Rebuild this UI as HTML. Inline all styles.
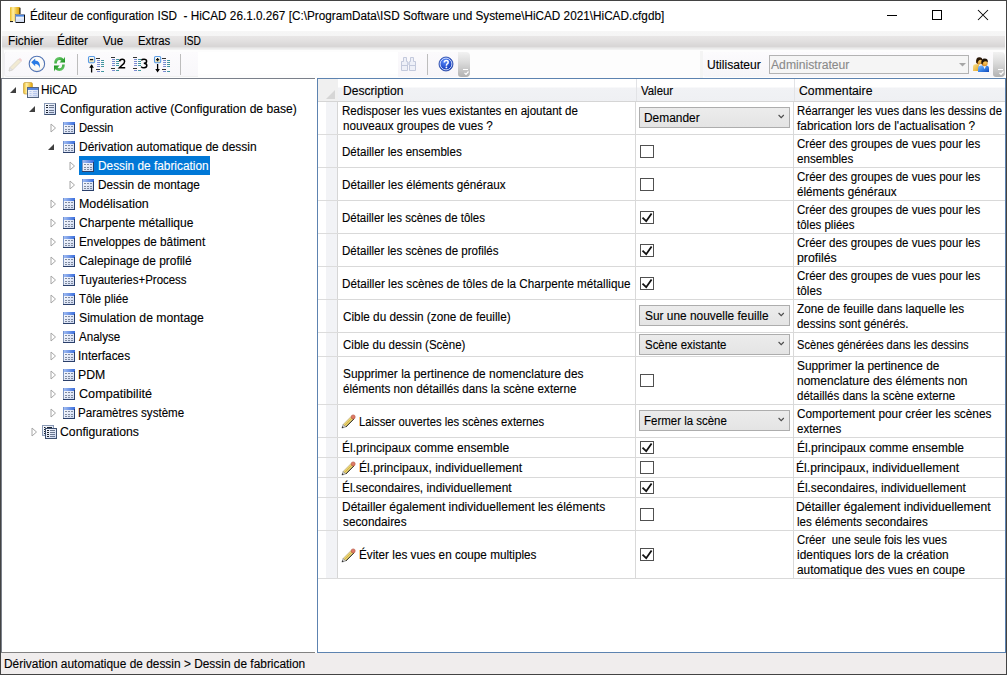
<!DOCTYPE html>
<html><head><meta charset="utf-8">
<style>
*{margin:0;padding:0;box-sizing:border-box}
html,body{width:1007px;height:675px;overflow:hidden;background:#fff}
body{position:relative;font-family:"Liberation Sans",sans-serif;font-size:12px;color:#000}
.a{position:absolute}
.t{position:absolute;white-space:pre;line-height:15px;transform-origin:0 0;-webkit-text-stroke:0.12px currentColor}
#win{position:absolute;left:0;top:0;width:1007px;height:675px;border:1px solid #434343;background:#fff}
</style></head><body>
<div id="win"></div>

<!-- title bar -->
<div class="a" style="left:1px;top:1px;width:1005px;height:30px;background:#fff"></div>
<svg class="a" style="left:9px;top:6px" width="17" height="18" viewBox="0 0 17 18">
  <defs>
    <linearGradient id="gy" x1="0" x2="1" y1="0" y2="0"><stop offset="0" stop-color="#e9b820"/><stop offset="0.3" stop-color="#fff1a8"/><stop offset="0.6" stop-color="#f2c84a"/><stop offset="1" stop-color="#d89a00"/></linearGradient>
    <linearGradient id="gw" x1="0" x2="0" y1="0" y2="1"><stop offset="0" stop-color="#fff"/><stop offset="1" stop-color="#c9d6ef"/></linearGradient>
  </defs>
  <rect x="1" y="1" width="10" height="14.5" rx="0.8" fill="url(#gy)"/>
  <path d="M11 1.8V8" stroke="#111" stroke-width="1"/>
  <path d="M1 15.6H4" stroke="#111" stroke-width="1"/>
  <rect x="6.5" y="8.5" width="9" height="8" fill="url(#gw)" stroke="#6b7a99" stroke-width="0.8"/>
  <path d="M15.5 9V16.5H7" stroke="#111" stroke-width="1" fill="none"/>
  <rect x="7" y="9" width="8" height="1.6" fill="#4a86e0"/>
</svg>
<!-- window controls -->
<div class="a" style="left:887px;top:15px;width:10px;height:1px;background:#000"></div>
<div class="a" style="left:932px;top:10px;width:10px;height:10px;border:1px solid #000"></div>
<svg class="a" style="left:977px;top:9px" width="12" height="12" viewBox="0 0 12 12"><path d="M1 1L11 11M11 1L1 11" stroke="#000" stroke-width="1.05"/></svg>

<!-- menu bar -->
<div class="a" style="left:2px;top:31px;width:1003px;height:19px;background:linear-gradient(#f6f6f6 0,#f5f5f5 4.5px,#e8e6e6 5.5px,#e2e0e0 10px,#d9d7d7 14.5px,#d8d6d6 15.5px,#e8e8e8 17px,#f4f4f4 19px)"></div>

<!-- toolbar -->
<div class="a" style="left:2px;top:50px;width:1003px;height:28px;background:#fdfdfd"></div><div class="a" style="left:2px;top:50px;width:2px;height:28px;background:#f0f0f0"></div>
<div id="toolbar">
<div class="a" style="left:4px;top:52px;width:194px;height:25px;border-radius:3px 0 0 3px;background:linear-gradient(#fcfbfd,#f8f7fa);border-left:1px solid #f0eef2;border-bottom:1px solid #f0f0f0"></div>
<div class="a" style="left:198px;top:52px;width:200px;height:22px;background:#fff"></div>
<div class="a" style="left:398px;top:52px;width:61px;height:25px;background:linear-gradient(#fbfafc,#f7f5f9)"></div>
<div class="a" style="left:458px;top:52px;width:12px;height:25px;border-radius:0 4px 4px 3px;background:linear-gradient(#f2f2f2 0,#dcdcdc 40%,#b2b2b2 100%)"></div>
<div class="a" style="left:700px;top:51px;width:3px;height:27px;background:#f4f4f4"></div>
<div class="a" style="left:703px;top:52px;width:291px;height:25px;border-radius:3px 0 0 3px;background:linear-gradient(#fcfbfd,#f6f5f8)"></div>
<div class="a" style="left:993px;top:52px;width:12px;height:25px;border-radius:0 4px 4px 3px;background:linear-gradient(#f2f2f2 0,#dcdcdc 40%,#b2b2b2 100%)"></div>
<!-- grip marks -->
<div class="a" style="left:463px;top:69px;width:5px;height:1px;background:#fff"></div>
<svg class="a" style="left:463px;top:71px" width="7" height="5"><path d="M1.5 1.8L3 3.3L5.5 0.5" stroke="#fff" fill="none" stroke-width="1.2"/></svg>
<div class="a" style="left:998px;top:69px;width:5px;height:1px;background:#fff"></div>
<svg class="a" style="left:998px;top:71px" width="7" height="5"><path d="M1.5 1.8L3 3.3L5.5 0.5" stroke="#fff" fill="none" stroke-width="1.2"/></svg>
<!-- separators -->
<div class="a" style="left:77px;top:54px;width:1px;height:21px;background:#bdbdbd"></div>
<div class="a" style="left:180px;top:54px;width:1px;height:21px;background:#bdbdbd"></div>
<div class="a" style="left:427px;top:54px;width:1px;height:21px;background:#bdbdbd"></div>
<!-- pencil disabled -->
<svg class="a" style="left:7px;top:57px" width="16" height="16" viewBox="0 0 16 16">
  <path d="M2 14L3 10.5L11.5 2L14 4.5L5.5 13Z" fill="#f1ead2" stroke="#d8d4cc" stroke-width="0.8"/>
  <path d="M11.5 2L14 4.5L15 3.5Q15 2 13 1Z" fill="#f2cfcf"/>
  <path d="M2 14L3 10.5L5.5 13Z" fill="#e6e6e6" stroke="#cfcfcf" stroke-width="0.5"/>
</svg>
<!-- undo -->
<svg class="a" style="left:28px;top:55px" width="18" height="18" viewBox="0 0 18 18">
  <defs><radialGradient id="gu" cx="0.45" cy="0.35" r="0.7"><stop offset="0" stop-color="#fff"/><stop offset="0.7" stop-color="#fbfaf6"/><stop offset="1" stop-color="#ece8dc"/></radialGradient></defs>
  <circle cx="8.9" cy="8.9" r="7.7" fill="url(#gu)" stroke="#5274b4" stroke-width="1.1"/>
  <path d="M3.2 7.3L7.2 3.4V5.5Q12.6 5.6 11.9 13.2Q10.6 9.1 7.2 9.1V11.3Z" fill="#2a7be4"/>
</svg>
<!-- refresh -->
<svg class="a" style="left:53px;top:56px" width="13" height="16" viewBox="0 0 13 16">
  <defs><linearGradient id="gr" x1="0" y1="0" x2="1" y2="1"><stop offset="0" stop-color="#7fd87f"/><stop offset="1" stop-color="#0e8a12"/></linearGradient></defs>
  <path d="M1.2 7.6Q1.2 1.2 6.6 1.1Q9.2 1.1 10.6 2.9L12 0.8V6.6H6.4L8.3 4.8Q7.6 3.9 6.4 3.9Q3.8 4.1 3.8 7.6Z" fill="url(#gr)"/>
  <path transform="rotate(180 6.5 8.1)" d="M1.2 7.6Q1.2 1.2 6.6 1.1Q9.2 1.1 10.6 2.9L12 0.8V6.6H6.4L8.3 4.8Q7.6 3.9 6.4 3.9Q3.8 4.1 3.8 7.6Z" fill="url(#gr)"/>
</svg>
<!-- collapse -->
<svg class="a" style="left:87px;top:55px" width="19" height="19" viewBox="0 0 19 19">
  <defs><linearGradient id="gb" x1="0" y1="0" x2="0" y2="1"><stop offset="0" stop-color="#fff"/><stop offset="1" stop-color="#e8e0b0"/></linearGradient>
  <linearGradient id="gd" x1="0" y1="0" x2="1" y2="0"><stop offset="0" stop-color="#8f88e0"/><stop offset="1" stop-color="#2f9a90"/></linearGradient></defs>
  <rect x="1.5" y="1.5" width="6.2" height="6.2" rx="1.2" fill="url(#gb)" stroke="#5a9be6" stroke-width="1.1"/>
  <path d="M3 4.6H6.2" stroke="#111" stroke-width="1.3"/>
  <path d="M4.6 10V17.5" stroke="#000" stroke-width="1.3"/><path d="M2.3 12.8L4.6 9.2L6.9 12.8Z" fill="#000"/>
  <path d="M9 3.5H13M9 14.5H13" stroke="#333" stroke-width="1.1"/>
  <path d="M10 5.5H13M14 5.5H17M10 7.5H13M14 7.5H17M10 9.5H13M14 9.5H17M10 11.5H13M14 11.5H17M10 16.5H13M14 16.5H17" stroke="url(#gd)" stroke-width="1"/>
</svg>
<!-- 2 -->
<svg class="a" style="left:110px;top:55px" width="17" height="18" viewBox="0 0 17 18">
  <defs><linearGradient id="gd2" x1="0" y1="0" x2="1" y2="0"><stop offset="0" stop-color="#8f88e0"/><stop offset="1" stop-color="#2f9a90"/></linearGradient></defs>
  <path d="M1 2.5H5M1 13.5H5" stroke="#333" stroke-width="1.1"/>
  <path d="M2 4.5H5M6 4.5H9M2 6.5H5M6 6.5H9M2 8.5H5M6 8.5H9M2 10.5H5M6 10.5H9M2 15.5H5M6 15.5H9" stroke="url(#gd2)" stroke-width="1"/>
  <path d="M9.6 6.4Q9.8 4.2 12.2 4.2Q14.6 4.2 14.6 6.4Q14.6 8 12.2 10L9.4 12.8H15.2" fill="none" stroke="#000" stroke-width="1.5"/>
</svg>
<!-- 3 -->
<svg class="a" style="left:132px;top:55px" width="17" height="18" viewBox="0 0 17 18">
  <path d="M1 2.5H5M1 13.5H5" stroke="#333" stroke-width="1.1"/>
  <path d="M2 4.5H5M6 4.5H9M2 6.5H5M6 6.5H9M2 8.5H5M6 8.5H9M2 10.5H5M6 10.5H9M2 15.5H5M6 15.5H9" stroke="url(#gd2)" stroke-width="1"/>
  <path d="M9.3 5.3Q10 4.2 12 4.2Q14.6 4.2 14.6 6.2Q14.6 8.2 11.8 8.3Q14.8 8.4 14.8 10.6Q14.8 12.8 12 12.8Q10 12.8 9.1 11.6" fill="none" stroke="#000" stroke-width="1.5"/>
</svg>
<!-- expand -->
<svg class="a" style="left:153px;top:55px" width="19" height="19" viewBox="0 0 19 19">
  <rect x="1.5" y="1.5" width="6.2" height="6.2" rx="1.2" fill="url(#gb)" stroke="#5a9be6" stroke-width="1.1"/>
  <path d="M3 4.6H6.2M4.6 3V6.2" stroke="#111" stroke-width="1.3"/>
  <path d="M4.6 9V16" stroke="#000" stroke-width="1.3"/><path d="M2.3 14L4.6 17.6L6.9 14Z" fill="#000"/>
  <path d="M9 3.5H13M9 14.5H13" stroke="#333" stroke-width="1.1"/>
  <path d="M10 5.5H13M14 5.5H17M10 7.5H13M14 7.5H17M10 9.5H13M14 9.5H17M10 11.5H13M14 11.5H17M10 16.5H13M14 16.5H17" stroke="url(#gd)" stroke-width="1"/>
</svg>
<!-- binoculars disabled -->
<svg class="a" style="left:400px;top:56px" width="18" height="16" viewBox="0 0 18 16">
  <path d="M3.5 1.5H6.5V5.5H7.5V14.5H1.5V5.5H3.5Z" fill="#eef0f8" stroke="#c3c9dc" stroke-width="1"/>
  <path d="M10.5 1.5H13.5V5.5H15.5V14.5H9.5V5.5H10.5Z" fill="#eef0f8" stroke="#c3c9dc" stroke-width="1"/>
  <path d="M1.5 9.5H7.5M9.5 9.5H15.5" stroke="#c3c9dc" stroke-width="1"/>
  <rect x="7.5" y="6" width="2" height="3" fill="#d4d9e8"/>
</svg>
<!-- help -->
<svg class="a" style="left:438px;top:56px" width="16" height="16" viewBox="0 0 16 16">
  <defs><radialGradient id="gh" cx="0.4" cy="0.3" r="0.7"><stop offset="0" stop-color="#5a8cff"/><stop offset="1" stop-color="#0a2fb0"/></radialGradient></defs>
  <circle cx="8" cy="8" r="7" fill="url(#gh)" stroke="#1c3fa0" stroke-width="0.8"/>
  <circle cx="8" cy="8" r="5.9" fill="none" stroke="#dfe8ff" stroke-width="0.9"/>
  <path d="M6.3 6.4Q6.3 4.5 8.3 4.5Q10.2 4.5 10.2 6.2Q10.2 7.3 9 8Q8.4 8.4 8.4 9.7" fill="none" stroke="#fff" stroke-width="1.5"/><circle cx="8.4" cy="11.4" r="0.9" fill="#fff"/>
</svg>
<!-- user area -->
<div class="a" style="left:769px;top:55px;width:200px;height:19px;border:1px solid #b3b3b3;background:#f5f5f5"></div>
<svg class="a" style="left:959px;top:63px" width="7" height="4"><path d="M0 0H7L3.5 3.5Z" fill="#a6a6a6"/></svg>
<svg class="a" style="left:972px;top:56px" width="18" height="17" viewBox="0 0 18 17">
  <defs>
    <linearGradient id="pyb" x1="0" y1="0" x2="1" y2="1"><stop offset="0" stop-color="#fbe08a"/><stop offset="1" stop-color="#e2a628"/></linearGradient>
    <linearGradient id="pbb" x1="0" y1="0" x2="1" y2="1"><stop offset="0" stop-color="#8cc4ff"/><stop offset="0.5" stop-color="#3a86ea"/><stop offset="1" stop-color="#1048b8"/></linearGradient>
    <radialGradient id="pfc" cx="0.6" cy="0.4" r="0.6"><stop offset="0" stop-color="#f8cc60"/><stop offset="1" stop-color="#d88a20"/></radialGradient>
  </defs>
  <path d="M1 15V10.5Q1 8.3 3.5 8.3H7V15Z" fill="url(#pyb)"/>
  <circle cx="7.2" cy="5.6" r="2.9" fill="url(#pfc)"/>
  <path d="M4.2 6.5Q3.6 1.4 7.4 1.3Q10.6 1.3 10.2 4.6Q8.6 3.2 6.8 4.4Q5.6 5.6 5.4 8Z" fill="#2a1808"/>
  <path d="M6 16V12.2Q6 9.4 9 9.4H14Q17 9.4 17 12.2V16Z" fill="url(#pbb)"/>
  <path d="M11 9.6L12.6 13.2L14.2 9.6Z" fill="#f4f4f4"/>
  <circle cx="12.6" cy="7.3" r="3" fill="url(#pfc)"/>
  <path d="M9.4 8Q8.8 2.6 12.6 2.6Q16.4 2.6 15.8 6.6Q14.6 4.8 12.2 5.4Q10.6 6 10.4 8.6Z" fill="#1e1206"/>
</svg>
</div>


<div class="t" style="left:29.72px;top:9px;transform:scaleX(0.9793);">Éditeur de configuration ISD  - HiCAD 26.1.0.267 [C:\ProgramData\ISD Software und Systeme\HiCAD 2021\HiCAD.cfgdb]</div>
<div class="t" style="left:7.61px;top:34px;transform:scaleX(0.9871);">Fichier</div>
<div class="t" style="left:57.21px;top:34px;transform:scaleX(0.9884);">Éditer</div>
<div class="t" style="left:103.30px;top:34px;transform:scaleX(0.9659);">Vue</div>
<div class="t" style="left:137.56px;top:34px;transform:scaleX(0.9446);">Extras</div>
<div class="t" style="left:183.55px;top:34px;transform:scaleX(0.8486);">ISD</div>
<div class="t" style="left:707.39px;top:58px;transform:scaleX(1.0067);">Utilisateur</div>
<div class="t" style="left:771.30px;top:58px;transform:scaleX(1.0136);color:#8a8a8a">Administrateur</div>
<!-- tree panel -->
<div class="a" style="left:1px;top:78px;width:314px;height:575px;background:#fff;border-left:1px solid #7a808a;border-top:1px solid #7a808a;border-bottom:1px solid #828282"></div>
<svg width="0" height="0" style="position:absolute"><defs>
<linearGradient id="tbody" x1="0" y1="0" x2="1" y2="1"><stop offset="0" stop-color="#ffffff"/><stop offset="1" stop-color="#c8d4f0"/></linearGradient>
<linearGradient id="thead" x1="0" y1="0" x2="1" y2="0"><stop offset="0" stop-color="#a9c2f2"/><stop offset="1" stop-color="#3a6ede"/></linearGradient>
<linearGradient id="tleft" x1="0" y1="0" x2="0" y2="1"><stop offset="0" stop-color="#6f93d8"/><stop offset="1" stop-color="#8a96aa"/></linearGradient>
<linearGradient id="cyl" x1="0" y1="0" x2="1" y2="0"><stop offset="0" stop-color="#e8b82a"/><stop offset="0.35" stop-color="#fff0a8"/><stop offset="1" stop-color="#e0a000"/></linearGradient>
</defs></svg>
<svg class="a" style="left:10px;top:87px" width="7" height="7" viewBox="0 0 7 7"><path d="M6 0V6H0Z" fill="#404040"/></svg>
<svg class="a" style="left:23px;top:82px" width="17" height="17" viewBox="0 0 17 17">
<rect x="0.5" y="0.5" width="9" height="11.5" rx="1.5" fill="url(#cyl)" stroke="#c9a040" stroke-width="0.7"/>
<rect x="4.5" y="5.5" width="11" height="10" fill="url(#tbody)" stroke="#55657f" stroke-width="1"/>
<rect x="5" y="6" width="10" height="2" fill="#5a88e0"/>
<path d="M6.5 9.5H8.5M10 9.5H14M6.5 11.5H8.5M10 11.5H14M6.5 13.5H8.5M10 13.5H14" stroke="#b8c8ee" stroke-width="1"/>
</svg>
<div class="t" style="left:40.81px;top:83px;transform:scaleX(0.9857);color:#000">HiCAD</div>
<svg class="a" style="left:29px;top:106px" width="7" height="7" viewBox="0 0 7 7"><path d="M6 0V6H0Z" fill="#404040"/></svg>
<svg class="a" style="left:44px;top:103px" width="12" height="12" viewBox="0 0 12 12">
<rect x="0.5" y="0.5" width="11" height="11" fill="url(#tbody)" stroke="#8a9ab5" stroke-width="1"/>
<path d="M11.5 0.5V11.5H0.5" stroke="#3d5070" stroke-width="1" fill="none"/>
<path d="M2 2.5H4M2 4.5H4M2 7.5H4M2 9.5H4" stroke="#1e2530" stroke-width="1"/>
<path d="M5 2.5H10M5 4.5H10M5 7.5H10M5 9.5H10" stroke="#6b7890" stroke-width="1"/>
</svg>
<div class="t" style="left:59.50px;top:102px;transform:scaleX(1.0081);color:#000">Configuration active (Configuration de base)</div>
<svg class="a" style="left:50px;top:123px" width="7" height="10" viewBox="0 0 7 10"><path d="M1 1V9L5.5 5Z" fill="#fff" stroke="#a6a6a6" stroke-width="1"/></svg>
<svg class="a" style="left:63px;top:122px" width="12" height="12" viewBox="0 0 12 12">
<rect x="0" y="0" width="12" height="12" fill="url(#tbody)"/>
<rect x="0" y="0" width="12" height="3" fill="url(#thead)"/>
<rect x="0" y="0" width="1" height="12" fill="url(#tleft)"/>
<rect x="11" y="2" width="1" height="10" fill="#2a3f6a"/><rect x="0" y="11" width="12" height="1" fill="#2a3f6a"/>
<path d="M2 4.5H4M5 4.5H7M8 4.5H10M2 7.5H4M5 7.5H7M8 7.5H10M2 9.5H4M5 9.5H7M8 9.5H10" stroke="#737f94" stroke-width="0.9"/>
</svg>
<div class="t" style="left:78.66px;top:121px;transform:scaleX(0.9371);color:#000">Dessin</div>
<svg class="a" style="left:48px;top:144px" width="7" height="7" viewBox="0 0 7 7"><path d="M6 0V6H0Z" fill="#404040"/></svg>
<svg class="a" style="left:63px;top:141px" width="12" height="12" viewBox="0 0 12 12">
<rect x="0" y="0" width="12" height="12" fill="url(#tbody)"/>
<rect x="0" y="0" width="12" height="3" fill="url(#thead)"/>
<rect x="0" y="0" width="1" height="12" fill="url(#tleft)"/>
<rect x="11" y="2" width="1" height="10" fill="#2a3f6a"/><rect x="0" y="11" width="12" height="1" fill="#2a3f6a"/>
<path d="M2 4.5H4M5 4.5H7M8 4.5H10M2 7.5H4M5 7.5H7M8 7.5H10M2 9.5H4M5 9.5H7M8 9.5H10" stroke="#737f94" stroke-width="0.9"/>
</svg>
<div class="t" style="left:78.60px;top:140px;transform:scaleX(0.9974);color:#000">Dérivation automatique de dessin</div>
<div class="a" style="left:79px;top:156px;width:131px;height:19px;background:#0078d7"></div>
<svg class="a" style="left:69px;top:161px" width="7" height="10" viewBox="0 0 7 10"><path d="M1 1V9L5.5 5Z" fill="#fff" stroke="#a6a6a6" stroke-width="1"/></svg>
<svg class="a" style="left:82px;top:160px" width="12" height="12" viewBox="0 0 12 12">
<rect x="0" y="0" width="12" height="12" fill="url(#tbody)"/>
<rect x="0" y="0" width="12" height="3" fill="url(#thead)"/>
<rect x="0" y="0" width="1" height="12" fill="url(#tleft)"/>
<rect x="11" y="2" width="1" height="10" fill="#2a3f6a"/><rect x="0" y="11" width="12" height="1" fill="#2a3f6a"/>
<path d="M2 4.5H4M5 4.5H7M8 4.5H10M2 7.5H4M5 7.5H7M8 7.5H10M2 9.5H4M5 9.5H7M8 9.5H10" stroke="#737f94" stroke-width="0.9"/>
</svg>
<div class="t" style="left:97.51px;top:159px;transform:scaleX(0.9868);color:#fff">Dessin de fabrication</div>
<svg class="a" style="left:69px;top:180px" width="7" height="10" viewBox="0 0 7 10"><path d="M1 1V9L5.5 5Z" fill="#fff" stroke="#a6a6a6" stroke-width="1"/></svg>
<svg class="a" style="left:82px;top:179px" width="12" height="12" viewBox="0 0 12 12">
<rect x="0" y="0" width="12" height="12" fill="url(#tbody)"/>
<rect x="0" y="0" width="12" height="3" fill="url(#thead)"/>
<rect x="0" y="0" width="1" height="12" fill="url(#tleft)"/>
<rect x="11" y="2" width="1" height="10" fill="#2a3f6a"/><rect x="0" y="11" width="12" height="1" fill="#2a3f6a"/>
<path d="M2 4.5H4M5 4.5H7M8 4.5H10M2 7.5H4M5 7.5H7M8 7.5H10M2 9.5H4M5 9.5H7M8 9.5H10" stroke="#737f94" stroke-width="0.9"/>
</svg>
<div class="t" style="left:97.51px;top:178px;transform:scaleX(0.9853);color:#000">Dessin de montage</div>
<svg class="a" style="left:50px;top:199px" width="7" height="10" viewBox="0 0 7 10"><path d="M1 1V9L5.5 5Z" fill="#fff" stroke="#a6a6a6" stroke-width="1"/></svg>
<svg class="a" style="left:63px;top:198px" width="12" height="12" viewBox="0 0 12 12">
<rect x="0" y="0" width="12" height="12" fill="url(#tbody)"/>
<rect x="0" y="0" width="12" height="3" fill="url(#thead)"/>
<rect x="0" y="0" width="1" height="12" fill="url(#tleft)"/>
<rect x="11" y="2" width="1" height="10" fill="#2a3f6a"/><rect x="0" y="11" width="12" height="1" fill="#2a3f6a"/>
<path d="M2 4.5H4M5 4.5H7M8 4.5H10M2 7.5H4M5 7.5H7M8 7.5H10M2 9.5H4M5 9.5H7M8 9.5H10" stroke="#737f94" stroke-width="0.9"/>
</svg>
<div class="t" style="left:78.56px;top:197px;transform:scaleX(1.0351);color:#000">Modélisation</div>
<svg class="a" style="left:50px;top:218px" width="7" height="10" viewBox="0 0 7 10"><path d="M1 1V9L5.5 5Z" fill="#fff" stroke="#a6a6a6" stroke-width="1"/></svg>
<svg class="a" style="left:63px;top:217px" width="12" height="12" viewBox="0 0 12 12">
<rect x="0" y="0" width="12" height="12" fill="url(#tbody)"/>
<rect x="0" y="0" width="12" height="3" fill="url(#thead)"/>
<rect x="0" y="0" width="1" height="12" fill="url(#tleft)"/>
<rect x="11" y="2" width="1" height="10" fill="#2a3f6a"/><rect x="0" y="11" width="12" height="1" fill="#2a3f6a"/>
<path d="M2 4.5H4M5 4.5H7M8 4.5H10M2 7.5H4M5 7.5H7M8 7.5H10M2 9.5H4M5 9.5H7M8 9.5H10" stroke="#737f94" stroke-width="0.9"/>
</svg>
<div class="t" style="left:79.10px;top:216px;transform:scaleX(1.0027);color:#000">Charpente métallique</div>
<svg class="a" style="left:50px;top:237px" width="7" height="10" viewBox="0 0 7 10"><path d="M1 1V9L5.5 5Z" fill="#fff" stroke="#a6a6a6" stroke-width="1"/></svg>
<svg class="a" style="left:63px;top:236px" width="12" height="12" viewBox="0 0 12 12">
<rect x="0" y="0" width="12" height="12" fill="url(#tbody)"/>
<rect x="0" y="0" width="12" height="3" fill="url(#thead)"/>
<rect x="0" y="0" width="1" height="12" fill="url(#tleft)"/>
<rect x="11" y="2" width="1" height="10" fill="#2a3f6a"/><rect x="0" y="11" width="12" height="1" fill="#2a3f6a"/>
<path d="M2 4.5H4M5 4.5H7M8 4.5H10M2 7.5H4M5 7.5H7M8 7.5H10M2 9.5H4M5 9.5H7M8 9.5H10" stroke="#737f94" stroke-width="0.9"/>
</svg>
<div class="t" style="left:78.62px;top:235px;transform:scaleX(0.9800);color:#000">Enveloppes de bâtiment</div>
<svg class="a" style="left:50px;top:256px" width="7" height="10" viewBox="0 0 7 10"><path d="M1 1V9L5.5 5Z" fill="#fff" stroke="#a6a6a6" stroke-width="1"/></svg>
<svg class="a" style="left:63px;top:255px" width="12" height="12" viewBox="0 0 12 12">
<rect x="0" y="0" width="12" height="12" fill="url(#tbody)"/>
<rect x="0" y="0" width="12" height="3" fill="url(#thead)"/>
<rect x="0" y="0" width="1" height="12" fill="url(#tleft)"/>
<rect x="11" y="2" width="1" height="10" fill="#2a3f6a"/><rect x="0" y="11" width="12" height="1" fill="#2a3f6a"/>
<path d="M2 4.5H4M5 4.5H7M8 4.5H10M2 7.5H4M5 7.5H7M8 7.5H10M2 9.5H4M5 9.5H7M8 9.5H10" stroke="#737f94" stroke-width="0.9"/>
</svg>
<div class="t" style="left:78.80px;top:254px;transform:scaleX(0.9929);color:#000">Calepinage de profilé</div>
<svg class="a" style="left:50px;top:275px" width="7" height="10" viewBox="0 0 7 10"><path d="M1 1V9L5.5 5Z" fill="#fff" stroke="#a6a6a6" stroke-width="1"/></svg>
<svg class="a" style="left:63px;top:274px" width="12" height="12" viewBox="0 0 12 12">
<rect x="0" y="0" width="12" height="12" fill="url(#tbody)"/>
<rect x="0" y="0" width="12" height="3" fill="url(#thead)"/>
<rect x="0" y="0" width="1" height="12" fill="url(#tleft)"/>
<rect x="11" y="2" width="1" height="10" fill="#2a3f6a"/><rect x="0" y="11" width="12" height="1" fill="#2a3f6a"/>
<path d="M2 4.5H4M5 4.5H7M8 4.5H10M2 7.5H4M5 7.5H7M8 7.5H10M2 9.5H4M5 9.5H7M8 9.5H10" stroke="#737f94" stroke-width="0.9"/>
</svg>
<div class="t" style="left:79.06px;top:273px;transform:scaleX(0.9554);color:#000">Tuyauteries+Process</div>
<svg class="a" style="left:50px;top:294px" width="7" height="10" viewBox="0 0 7 10"><path d="M1 1V9L5.5 5Z" fill="#fff" stroke="#a6a6a6" stroke-width="1"/></svg>
<svg class="a" style="left:63px;top:293px" width="12" height="12" viewBox="0 0 12 12">
<rect x="0" y="0" width="12" height="12" fill="url(#tbody)"/>
<rect x="0" y="0" width="12" height="3" fill="url(#thead)"/>
<rect x="0" y="0" width="1" height="12" fill="url(#tleft)"/>
<rect x="11" y="2" width="1" height="10" fill="#2a3f6a"/><rect x="0" y="11" width="12" height="1" fill="#2a3f6a"/>
<path d="M2 4.5H4M5 4.5H7M8 4.5H10M2 7.5H4M5 7.5H7M8 7.5H10M2 9.5H4M5 9.5H7M8 9.5H10" stroke="#737f94" stroke-width="0.9"/>
</svg>
<div class="t" style="left:79.06px;top:292px;transform:scaleX(0.9502);color:#000">Tôle pliée</div>
<svg class="a" style="left:63px;top:312px" width="12" height="12" viewBox="0 0 12 12">
<rect x="0" y="0" width="12" height="12" fill="url(#tbody)"/>
<rect x="0" y="0" width="12" height="3" fill="url(#thead)"/>
<rect x="0" y="0" width="1" height="12" fill="url(#tleft)"/>
<rect x="11" y="2" width="1" height="10" fill="#2a3f6a"/><rect x="0" y="11" width="12" height="1" fill="#2a3f6a"/>
<path d="M2 4.5H4M5 4.5H7M8 4.5H10M2 7.5H4M5 7.5H7M8 7.5H10M2 9.5H4M5 9.5H7M8 9.5H10" stroke="#737f94" stroke-width="0.9"/>
</svg>
<div class="t" style="left:78.79px;top:311px;transform:scaleX(1.0168);color:#000">Simulation de montage</div>
<svg class="a" style="left:50px;top:332px" width="7" height="10" viewBox="0 0 7 10"><path d="M1 1V9L5.5 5Z" fill="#fff" stroke="#a6a6a6" stroke-width="1"/></svg>
<svg class="a" style="left:63px;top:331px" width="12" height="12" viewBox="0 0 12 12">
<rect x="0" y="0" width="12" height="12" fill="url(#tbody)"/>
<rect x="0" y="0" width="12" height="3" fill="url(#thead)"/>
<rect x="0" y="0" width="1" height="12" fill="url(#tleft)"/>
<rect x="11" y="2" width="1" height="10" fill="#2a3f6a"/><rect x="0" y="11" width="12" height="1" fill="#2a3f6a"/>
<path d="M2 4.5H4M5 4.5H7M8 4.5H10M2 7.5H4M5 7.5H7M8 7.5H10M2 9.5H4M5 9.5H7M8 9.5H10" stroke="#737f94" stroke-width="0.9"/>
</svg>
<div class="t" style="left:79.30px;top:330px;transform:scaleX(0.9657);color:#000">Analyse</div>
<svg class="a" style="left:50px;top:351px" width="7" height="10" viewBox="0 0 7 10"><path d="M1 1V9L5.5 5Z" fill="#fff" stroke="#a6a6a6" stroke-width="1"/></svg>
<svg class="a" style="left:63px;top:350px" width="12" height="12" viewBox="0 0 12 12">
<rect x="0" y="0" width="12" height="12" fill="url(#tbody)"/>
<rect x="0" y="0" width="12" height="3" fill="url(#thead)"/>
<rect x="0" y="0" width="1" height="12" fill="url(#tleft)"/>
<rect x="11" y="2" width="1" height="10" fill="#2a3f6a"/><rect x="0" y="11" width="12" height="1" fill="#2a3f6a"/>
<path d="M2 4.5H4M5 4.5H7M8 4.5H10M2 7.5H4M5 7.5H7M8 7.5H10M2 9.5H4M5 9.5H7M8 9.5H10" stroke="#737f94" stroke-width="0.9"/>
</svg>
<div class="t" style="left:78.31px;top:349px;transform:scaleX(0.9893);color:#000">Interfaces</div>
<svg class="a" style="left:50px;top:370px" width="7" height="10" viewBox="0 0 7 10"><path d="M1 1V9L5.5 5Z" fill="#fff" stroke="#a6a6a6" stroke-width="1"/></svg>
<svg class="a" style="left:63px;top:369px" width="12" height="12" viewBox="0 0 12 12">
<rect x="0" y="0" width="12" height="12" fill="url(#tbody)"/>
<rect x="0" y="0" width="12" height="3" fill="url(#thead)"/>
<rect x="0" y="0" width="1" height="12" fill="url(#tleft)"/>
<rect x="11" y="2" width="1" height="10" fill="#2a3f6a"/><rect x="0" y="11" width="12" height="1" fill="#2a3f6a"/>
<path d="M2 4.5H4M5 4.5H7M8 4.5H10M2 7.5H4M5 7.5H7M8 7.5H10M2 9.5H4M5 9.5H7M8 9.5H10" stroke="#737f94" stroke-width="0.9"/>
</svg>
<div class="t" style="left:78.28px;top:368px;transform:scaleX(1.0222);color:#000">PDM</div>
<svg class="a" style="left:50px;top:389px" width="7" height="10" viewBox="0 0 7 10"><path d="M1 1V9L5.5 5Z" fill="#fff" stroke="#a6a6a6" stroke-width="1"/></svg>
<svg class="a" style="left:63px;top:388px" width="12" height="12" viewBox="0 0 12 12">
<rect x="0" y="0" width="12" height="12" fill="url(#tbody)"/>
<rect x="0" y="0" width="12" height="3" fill="url(#thead)"/>
<rect x="0" y="0" width="1" height="12" fill="url(#tleft)"/>
<rect x="11" y="2" width="1" height="10" fill="#2a3f6a"/><rect x="0" y="11" width="12" height="1" fill="#2a3f6a"/>
<path d="M2 4.5H4M5 4.5H7M8 4.5H10M2 7.5H4M5 7.5H7M8 7.5H10M2 9.5H4M5 9.5H7M8 9.5H10" stroke="#737f94" stroke-width="0.9"/>
</svg>
<div class="t" style="left:78.77px;top:387px;transform:scaleX(1.0520);color:#000">Compatibilité</div>
<svg class="a" style="left:50px;top:408px" width="7" height="10" viewBox="0 0 7 10"><path d="M1 1V9L5.5 5Z" fill="#fff" stroke="#a6a6a6" stroke-width="1"/></svg>
<svg class="a" style="left:63px;top:407px" width="12" height="12" viewBox="0 0 12 12">
<rect x="0" y="0" width="12" height="12" fill="url(#tbody)"/>
<rect x="0" y="0" width="12" height="3" fill="url(#thead)"/>
<rect x="0" y="0" width="1" height="12" fill="url(#tleft)"/>
<rect x="11" y="2" width="1" height="10" fill="#2a3f6a"/><rect x="0" y="11" width="12" height="1" fill="#2a3f6a"/>
<path d="M2 4.5H4M5 4.5H7M8 4.5H10M2 7.5H4M5 7.5H7M8 7.5H10M2 9.5H4M5 9.5H7M8 9.5H10" stroke="#737f94" stroke-width="0.9"/>
</svg>
<div class="t" style="left:78.34px;top:406px;transform:scaleX(0.9650);color:#000">Paramètres système</div>
<svg class="a" style="left:31px;top:427px" width="7" height="10" viewBox="0 0 7 10"><path d="M1 1V9L5.5 5Z" fill="#fff" stroke="#a6a6a6" stroke-width="1"/></svg>
<svg class="a" style="left:42px;top:425px" width="16" height="15" viewBox="0 0 16 15">
<rect x="0.5" y="0.5" width="11" height="10" fill="url(#tbody)" stroke="#8a9ab5" stroke-width="1"/>
<path d="M2 2.5H3.5M2 4.5H3.5M2 6.5H3.5M2 8.5H3.5M5 2.5H10" stroke="#1e2530" stroke-width="1"/>
<rect x="3.5" y="3.5" width="11" height="10" fill="url(#tbody)" stroke="#3d5070" stroke-width="1"/>
<path d="M5 5.5H7M5 7.5H7M5 9.5H7M5 11.5H7" stroke="#1e2530" stroke-width="1"/>
<path d="M8 5.5H13M8 7.5H13M8 9.5H13M8 11.5H13" stroke="#6b7890" stroke-width="1"/>
</svg>
<div class="t" style="left:59.89px;top:425px;transform:scaleX(1.0196);color:#000">Configurations</div>
<!-- grid panel -->
<div class="a" style="left:317px;top:78px;width:689px;height:575px;background:#fff;border:1px solid #5d83b0"></div>
<div class="a" style="left:318px;top:79px;width:20px;height:22px;background:#f0f0f0"></div>
<svg class="a" style="left:326px;top:90px" width="10" height="10"><path d="M9 0V9H0Z" fill="#d6d6d6"/></svg>
<div class="a" style="left:338px;top:79px;width:667px;height:22px;background:linear-gradient(#fff 0,#fff 8px,#f1f2f5 9px,#eff0f3 22px)"></div>
<div class="a" style="left:318px;top:101px;width:687px;height:1px;background:#d5d5d5"></div>
<div class="a" style="left:636px;top:79px;width:1px;height:22px;background:#e2e3e6"></div>
<div class="a" style="left:794px;top:79px;width:1px;height:22px;background:#e2e3e6"></div>
<div class="t" style="left:342.59px;top:84px;transform:scaleX(1.0077);">Description</div>
<div class="t" style="left:640.90px;top:84px;transform:scaleX(0.9511);">Valeur</div>
<div class="t" style="left:798.89px;top:84px;transform:scaleX(1.0197);">Commentaire</div>
<div class="a" style="left:318px;top:102px;width:19px;height:32px;background:linear-gradient(90deg,#fff 0,#fff 8px,#f2f3f6 8px)"></div>
<div class="a" style="left:318px;top:134px;width:20px;height:1px;background:#dcdcdc"></div>
<div class="a" style="left:337px;top:102px;width:1px;height:32px;background:#d6d6d6"></div>
<div class="a" style="left:338px;top:134px;width:667px;height:1px;background:#d9d9d9"></div>
<div class="a" style="left:635px;top:102px;width:1px;height:32px;background:#d9d9d9"></div>
<div class="a" style="left:793px;top:102px;width:1px;height:32px;background:#d9d9d9"></div>
<div class="t" style="left:342.44px;top:104px;transform:scaleX(0.9636);">Redisposer les vues existantes en ajoutant de</div>
<div class="t" style="left:342.67px;top:119px;transform:scaleX(0.9719);">nouveaux groupes de vues ?</div>
<div class="t" style="left:796.55px;top:104px;transform:scaleX(0.9454);">Réarranger les vues dans les dessins de</div>
<div class="t" style="left:797.25px;top:119px;transform:scaleX(0.9916);">fabrication lors de l&#x27;actualisation ?</div>
<div class="a" style="left:639px;top:107px;width:151px;height:21px;border:1px solid #adadad;background:linear-gradient(#ececec,#e4e4e4)"></div>
<div class="t" style="left:644.41px;top:111px;transform:scaleX(0.9927);">Demander</div>
<svg class="a" style="left:778px;top:114px" width="7" height="5" viewBox="0 0 7 5"><path d="M0.6 1L3.2 3.7L5.8 1" stroke="#4a4a4a" stroke-width="1.1" fill="none"/></svg>
<div class="a" style="left:318px;top:135px;width:19px;height:32px;background:linear-gradient(90deg,#fff 0,#fff 8px,#f2f3f6 8px)"></div>
<div class="a" style="left:318px;top:167px;width:20px;height:1px;background:#dcdcdc"></div>
<div class="a" style="left:337px;top:135px;width:1px;height:32px;background:#d6d6d6"></div>
<div class="a" style="left:338px;top:167px;width:667px;height:1px;background:#d9d9d9"></div>
<div class="a" style="left:635px;top:135px;width:1px;height:32px;background:#d9d9d9"></div>
<div class="a" style="left:793px;top:135px;width:1px;height:32px;background:#d9d9d9"></div>
<div class="t" style="left:342.44px;top:145px;transform:scaleX(0.9646);">Détailler les ensembles</div>
<div class="t" style="left:797.02px;top:137px;transform:scaleX(0.9602);">Créer des groupes de vues pour les</div>
<div class="t" style="left:797.02px;top:152px;transform:scaleX(0.9694);">ensembles</div>
<div class="a" style="left:640px;top:145px;width:14px;height:13px;border:1px solid #505050;background:#fff"></div>
<div class="a" style="left:318px;top:168px;width:19px;height:32px;background:linear-gradient(90deg,#fff 0,#fff 8px,#f2f3f6 8px)"></div>
<div class="a" style="left:318px;top:200px;width:20px;height:1px;background:#dcdcdc"></div>
<div class="a" style="left:337px;top:168px;width:1px;height:32px;background:#d6d6d6"></div>
<div class="a" style="left:338px;top:200px;width:667px;height:1px;background:#d9d9d9"></div>
<div class="a" style="left:635px;top:168px;width:1px;height:32px;background:#d9d9d9"></div>
<div class="a" style="left:793px;top:168px;width:1px;height:32px;background:#d9d9d9"></div>
<div class="t" style="left:342.43px;top:178px;transform:scaleX(0.9727);">Détailler les éléments généraux</div>
<div class="t" style="left:797.02px;top:170px;transform:scaleX(0.9602);">Créer des groupes de vues pour les</div>
<div class="t" style="left:797.01px;top:185px;transform:scaleX(0.9748);">éléments généraux</div>
<div class="a" style="left:640px;top:178px;width:14px;height:13px;border:1px solid #505050;background:#fff"></div>
<div class="a" style="left:318px;top:201px;width:19px;height:32px;background:linear-gradient(90deg,#fff 0,#fff 8px,#f2f3f6 8px)"></div>
<div class="a" style="left:318px;top:233px;width:20px;height:1px;background:#dcdcdc"></div>
<div class="a" style="left:337px;top:201px;width:1px;height:32px;background:#d6d6d6"></div>
<div class="a" style="left:338px;top:233px;width:667px;height:1px;background:#d9d9d9"></div>
<div class="a" style="left:635px;top:201px;width:1px;height:32px;background:#d9d9d9"></div>
<div class="a" style="left:793px;top:201px;width:1px;height:32px;background:#d9d9d9"></div>
<div class="t" style="left:342.44px;top:211px;transform:scaleX(0.9568);">Détailler les scènes de tôles</div>
<div class="t" style="left:797.02px;top:203px;transform:scaleX(0.9602);">Créer des groupes de vues pour les</div>
<div class="t" style="left:797.26px;top:218px;transform:scaleX(0.9580);">tôles pliées</div>
<div class="a" style="left:640px;top:211px;width:14px;height:13px;border:1px solid #505050;background:#fff"></div>
<svg class="a" style="left:640px;top:211px" width="14" height="13" viewBox="0 0 14 13"><path d="M2.5 6.7L6.2 10.2L11.6 2.5" stroke="#111" stroke-width="1.8" fill="none"/></svg>
<div class="a" style="left:318px;top:234px;width:19px;height:32px;background:linear-gradient(90deg,#fff 0,#fff 8px,#f2f3f6 8px)"></div>
<div class="a" style="left:318px;top:266px;width:20px;height:1px;background:#dcdcdc"></div>
<div class="a" style="left:337px;top:234px;width:1px;height:32px;background:#d6d6d6"></div>
<div class="a" style="left:338px;top:266px;width:667px;height:1px;background:#d9d9d9"></div>
<div class="a" style="left:635px;top:234px;width:1px;height:32px;background:#d9d9d9"></div>
<div class="a" style="left:793px;top:234px;width:1px;height:32px;background:#d9d9d9"></div>
<div class="t" style="left:342.44px;top:244px;transform:scaleX(0.9619);">Détailler les scènes de profilés</div>
<div class="t" style="left:797.02px;top:236px;transform:scaleX(0.9602);">Créer des groupes de vues pour les</div>
<div class="t" style="left:796.73px;top:251px;transform:scaleX(1.0267);">profilés</div>
<div class="a" style="left:640px;top:244px;width:14px;height:13px;border:1px solid #505050;background:#fff"></div>
<svg class="a" style="left:640px;top:244px" width="14" height="13" viewBox="0 0 14 13"><path d="M2.5 6.7L6.2 10.2L11.6 2.5" stroke="#111" stroke-width="1.8" fill="none"/></svg>
<div class="a" style="left:318px;top:267px;width:19px;height:32px;background:linear-gradient(90deg,#fff 0,#fff 8px,#f2f3f6 8px)"></div>
<div class="a" style="left:318px;top:299px;width:20px;height:1px;background:#dcdcdc"></div>
<div class="a" style="left:337px;top:267px;width:1px;height:32px;background:#d6d6d6"></div>
<div class="a" style="left:338px;top:299px;width:667px;height:1px;background:#d9d9d9"></div>
<div class="a" style="left:635px;top:267px;width:1px;height:32px;background:#d9d9d9"></div>
<div class="a" style="left:793px;top:267px;width:1px;height:32px;background:#d9d9d9"></div>
<div class="t" style="left:342.43px;top:277px;transform:scaleX(0.9737);">Détailler les scènes de tôles de la Charpente métallique</div>
<div class="t" style="left:797.02px;top:269px;transform:scaleX(0.9602);">Créer des groupes de vues pour les</div>
<div class="t" style="left:797.26px;top:284px;transform:scaleX(0.9778);">tôles</div>
<div class="a" style="left:640px;top:277px;width:14px;height:13px;border:1px solid #505050;background:#fff"></div>
<svg class="a" style="left:640px;top:277px" width="14" height="13" viewBox="0 0 14 13"><path d="M2.5 6.7L6.2 10.2L11.6 2.5" stroke="#111" stroke-width="1.8" fill="none"/></svg>
<div class="a" style="left:318px;top:300px;width:19px;height:32px;background:linear-gradient(90deg,#fff 0,#fff 8px,#f2f3f6 8px)"></div>
<div class="a" style="left:318px;top:332px;width:20px;height:1px;background:#dcdcdc"></div>
<div class="a" style="left:337px;top:300px;width:1px;height:32px;background:#d6d6d6"></div>
<div class="a" style="left:338px;top:332px;width:667px;height:1px;background:#d9d9d9"></div>
<div class="a" style="left:635px;top:300px;width:1px;height:32px;background:#d9d9d9"></div>
<div class="a" style="left:793px;top:300px;width:1px;height:32px;background:#d9d9d9"></div>
<div class="t" style="left:342.91px;top:310px;transform:scaleX(0.9817);">Cible du dessin (zone de feuille)</div>
<div class="t" style="left:797.01px;top:302px;transform:scaleX(0.9748);">Zone de feuille dans laquelle les</div>
<div class="t" style="left:797.02px;top:317px;transform:scaleX(0.9544);">dessins sont générés.</div>
<div class="a" style="left:639px;top:305px;width:151px;height:21px;border:1px solid #adadad;background:linear-gradient(#ececec,#e4e4e4)"></div>
<div class="t" style="left:644.90px;top:309px;transform:scaleX(0.9907);">Sur une nouvelle feuille</div>
<svg class="a" style="left:778px;top:312px" width="7" height="5" viewBox="0 0 7 5"><path d="M0.6 1L3.2 3.7L5.8 1" stroke="#4a4a4a" stroke-width="1.1" fill="none"/></svg>
<div class="a" style="left:318px;top:333px;width:19px;height:23px;background:linear-gradient(90deg,#fff 0,#fff 8px,#f2f3f6 8px)"></div>
<div class="a" style="left:318px;top:356px;width:20px;height:1px;background:#dcdcdc"></div>
<div class="a" style="left:337px;top:333px;width:1px;height:23px;background:#d6d6d6"></div>
<div class="a" style="left:338px;top:356px;width:667px;height:1px;background:#d9d9d9"></div>
<div class="a" style="left:635px;top:333px;width:1px;height:23px;background:#d9d9d9"></div>
<div class="a" style="left:793px;top:333px;width:1px;height:23px;background:#d9d9d9"></div>
<div class="t" style="left:342.92px;top:338px;transform:scaleX(0.9608);">Cible du dessin (Scène)</div>
<div class="t" style="left:797.04px;top:338px;transform:scaleX(0.9257);">Scènes générées dans les dessins</div>
<div class="a" style="left:639px;top:334px;width:151px;height:21px;border:1px solid #adadad;background:linear-gradient(#ececec,#e4e4e4)"></div>
<div class="t" style="left:644.92px;top:338px;transform:scaleX(0.9543);">Scène existante</div>
<svg class="a" style="left:778px;top:341px" width="7" height="5" viewBox="0 0 7 5"><path d="M0.6 1L3.2 3.7L5.8 1" stroke="#4a4a4a" stroke-width="1.1" fill="none"/></svg>
<div class="a" style="left:318px;top:357px;width:19px;height:47px;background:linear-gradient(90deg,#fff 0,#fff 8px,#f2f3f6 8px)"></div>
<div class="a" style="left:318px;top:404px;width:20px;height:1px;background:#dcdcdc"></div>
<div class="a" style="left:337px;top:357px;width:1px;height:47px;background:#d6d6d6"></div>
<div class="a" style="left:338px;top:404px;width:667px;height:1px;background:#d9d9d9"></div>
<div class="a" style="left:635px;top:357px;width:1px;height:47px;background:#d9d9d9"></div>
<div class="a" style="left:793px;top:357px;width:1px;height:47px;background:#d9d9d9"></div>
<div class="t" style="left:342.90px;top:367px;transform:scaleX(0.9905);">Supprimer la pertinence de nomenclature des</div>
<div class="t" style="left:342.91px;top:382px;transform:scaleX(0.9722);">éléments non détaillés dans la scène externe</div>
<div class="t" style="left:797.01px;top:359px;transform:scaleX(0.9881);">Supprimer la pertinence de</div>
<div class="t" style="left:796.75px;top:374px;transform:scaleX(0.9985);">nomenclature des éléments non</div>
<div class="t" style="left:797.02px;top:389px;transform:scaleX(0.9606);">détaillés dans la scène externe</div>
<div class="a" style="left:640px;top:374px;width:14px;height:13px;border:1px solid #505050;background:#fff"></div>
<div class="a" style="left:318px;top:405px;width:19px;height:32px;background:linear-gradient(90deg,#fff 0,#fff 8px,#f2f3f6 8px)"></div>
<div class="a" style="left:318px;top:437px;width:20px;height:1px;background:#dcdcdc"></div>
<div class="a" style="left:337px;top:405px;width:1px;height:32px;background:#d6d6d6"></div>
<div class="a" style="left:338px;top:437px;width:667px;height:1px;background:#d9d9d9"></div>
<div class="a" style="left:635px;top:405px;width:1px;height:32px;background:#d9d9d9"></div>
<div class="a" style="left:793px;top:405px;width:1px;height:32px;background:#d9d9d9"></div>
<svg class="a" style="left:341px;top:414px" width="15" height="15" viewBox="0 0 15 15">
<path d="M2.2 10.4L10.4 2.2L13 4.8L4.8 13Z" fill="#ecd472"/>
<path d="M3.4 11.6L11.6 3.4" stroke="#c9a93a" stroke-width="0.7"/>
<path d="M4.8 13L13 4.8" stroke="#141414" stroke-width="1"/>
<path d="M2.2 10.4L10.4 2.2" stroke="#a09060" stroke-width="0.5"/>
<circle cx="12.2" cy="2.9" r="2" fill="#de7a66" stroke="#b2503e" stroke-width="0.6"/>
<path d="M0.9 14.1L2.2 10.4L4.8 13Z" fill="#d4d4d4" stroke="#6a6a6a" stroke-width="0.5"/>
<path d="M0.9 14.1L1.5 12.3L2.7 13.5Z" fill="#101010"/>
</svg>
<div class="t" style="left:358.76px;top:415px;transform:scaleX(0.9383);">Laisser ouvertes les scènes externes</div>
<div class="t" style="left:797.01px;top:407px;transform:scaleX(0.9847);">Comportement pour créer les scènes</div>
<div class="t" style="left:797.02px;top:422px;transform:scaleX(0.9622);">externes</div>
<div class="a" style="left:639px;top:410px;width:151px;height:21px;border:1px solid #adadad;background:linear-gradient(#ececec,#e4e4e4)"></div>
<div class="t" style="left:644.44px;top:414px;transform:scaleX(0.9560);">Fermer la scène</div>
<svg class="a" style="left:778px;top:417px" width="7" height="5" viewBox="0 0 7 5"><path d="M0.6 1L3.2 3.7L5.8 1" stroke="#4a4a4a" stroke-width="1.1" fill="none"/></svg>
<div class="a" style="left:318px;top:438px;width:19px;height:19px;background:linear-gradient(90deg,#fff 0,#fff 8px,#f2f3f6 8px)"></div>
<div class="a" style="left:318px;top:457px;width:20px;height:1px;background:#dcdcdc"></div>
<div class="a" style="left:337px;top:438px;width:1px;height:19px;background:#d6d6d6"></div>
<div class="a" style="left:338px;top:457px;width:667px;height:1px;background:#d9d9d9"></div>
<div class="a" style="left:635px;top:438px;width:1px;height:19px;background:#d9d9d9"></div>
<div class="a" style="left:793px;top:438px;width:1px;height:19px;background:#d9d9d9"></div>
<div class="t" style="left:342.40px;top:441px;transform:scaleX(1.0027);">Él.principaux comme ensemble</div>
<div class="t" style="left:796.50px;top:441px;transform:scaleX(1.0015);">Él.principaux comme ensemble</div>
<div class="a" style="left:640px;top:441px;width:14px;height:13px;border:1px solid #505050;background:#fff"></div>
<svg class="a" style="left:640px;top:441px" width="14" height="13" viewBox="0 0 14 13"><path d="M2.5 6.7L6.2 10.2L11.6 2.5" stroke="#111" stroke-width="1.8" fill="none"/></svg>
<div class="a" style="left:318px;top:458px;width:19px;height:19px;background:linear-gradient(90deg,#fff 0,#fff 8px,#f2f3f6 8px)"></div>
<div class="a" style="left:318px;top:477px;width:20px;height:1px;background:#dcdcdc"></div>
<div class="a" style="left:337px;top:458px;width:1px;height:19px;background:#d6d6d6"></div>
<div class="a" style="left:338px;top:477px;width:667px;height:1px;background:#d9d9d9"></div>
<div class="a" style="left:635px;top:458px;width:1px;height:19px;background:#d9d9d9"></div>
<div class="a" style="left:793px;top:458px;width:1px;height:19px;background:#d9d9d9"></div>
<svg class="a" style="left:341px;top:461px" width="15" height="15" viewBox="0 0 15 15">
<path d="M2.2 10.4L10.4 2.2L13 4.8L4.8 13Z" fill="#ecd472"/>
<path d="M3.4 11.6L11.6 3.4" stroke="#c9a93a" stroke-width="0.7"/>
<path d="M4.8 13L13 4.8" stroke="#141414" stroke-width="1"/>
<path d="M2.2 10.4L10.4 2.2" stroke="#a09060" stroke-width="0.5"/>
<circle cx="12.2" cy="2.9" r="2" fill="#de7a66" stroke="#b2503e" stroke-width="0.6"/>
<path d="M0.9 14.1L2.2 10.4L4.8 13Z" fill="#d4d4d4" stroke="#6a6a6a" stroke-width="0.5"/>
<path d="M0.9 14.1L1.5 12.3L2.7 13.5Z" fill="#101010"/>
</svg>
<div class="t" style="left:358.69px;top:461px;transform:scaleX(1.0103);">Él.principaux, individuellement</div>
<div class="t" style="left:796.49px;top:461px;transform:scaleX(1.0103);">Él.principaux, individuellement</div>
<div class="a" style="left:640px;top:461px;width:14px;height:13px;border:1px solid #505050;background:#fff"></div>
<div class="a" style="left:318px;top:478px;width:19px;height:19px;background:linear-gradient(90deg,#fff 0,#fff 8px,#f2f3f6 8px)"></div>
<div class="a" style="left:318px;top:497px;width:20px;height:1px;background:#dcdcdc"></div>
<div class="a" style="left:337px;top:478px;width:1px;height:19px;background:#d6d6d6"></div>
<div class="a" style="left:338px;top:497px;width:667px;height:1px;background:#d9d9d9"></div>
<div class="a" style="left:635px;top:478px;width:1px;height:19px;background:#d9d9d9"></div>
<div class="a" style="left:793px;top:478px;width:1px;height:19px;background:#d9d9d9"></div>
<div class="t" style="left:342.41px;top:481px;transform:scaleX(0.9889);">Él.secondaires, individuellement</div>
<div class="t" style="left:796.51px;top:481px;transform:scaleX(0.9853);">Él.secondaires, individuellement</div>
<div class="a" style="left:640px;top:481px;width:14px;height:13px;border:1px solid #505050;background:#fff"></div>
<svg class="a" style="left:640px;top:481px" width="14" height="13" viewBox="0 0 14 13"><path d="M2.5 6.7L6.2 10.2L11.6 2.5" stroke="#111" stroke-width="1.8" fill="none"/></svg>
<div class="a" style="left:318px;top:498px;width:19px;height:32px;background:linear-gradient(90deg,#fff 0,#fff 8px,#f2f3f6 8px)"></div>
<div class="a" style="left:318px;top:530px;width:20px;height:1px;background:#dcdcdc"></div>
<div class="a" style="left:337px;top:498px;width:1px;height:32px;background:#d6d6d6"></div>
<div class="a" style="left:338px;top:530px;width:667px;height:1px;background:#d9d9d9"></div>
<div class="a" style="left:635px;top:498px;width:1px;height:32px;background:#d9d9d9"></div>
<div class="a" style="left:793px;top:498px;width:1px;height:32px;background:#d9d9d9"></div>
<div class="t" style="left:342.40px;top:500px;transform:scaleX(0.9989);">Détailler également individuellement les éléments</div>
<div class="t" style="left:342.91px;top:515px;transform:scaleX(0.9820);">secondaires</div>
<div class="t" style="left:796.49px;top:500px;transform:scaleX(1.0091);">Détailler également individuellement</div>
<div class="t" style="left:796.78px;top:515px;transform:scaleX(0.9654);">les éléments secondaires</div>
<div class="a" style="left:640px;top:508px;width:14px;height:13px;border:1px solid #505050;background:#fff"></div>
<div class="a" style="left:318px;top:531px;width:19px;height:47px;background:linear-gradient(90deg,#fff 0,#fff 8px,#f2f3f6 8px)"></div>
<div class="a" style="left:318px;top:578px;width:20px;height:1px;background:#dcdcdc"></div>
<div class="a" style="left:337px;top:531px;width:1px;height:47px;background:#d6d6d6"></div>
<div class="a" style="left:338px;top:578px;width:667px;height:1px;background:#d9d9d9"></div>
<div class="a" style="left:635px;top:531px;width:1px;height:47px;background:#d9d9d9"></div>
<div class="a" style="left:793px;top:531px;width:1px;height:47px;background:#d9d9d9"></div>
<svg class="a" style="left:341px;top:548px" width="15" height="15" viewBox="0 0 15 15">
<path d="M2.2 10.4L10.4 2.2L13 4.8L4.8 13Z" fill="#ecd472"/>
<path d="M3.4 11.6L11.6 3.4" stroke="#c9a93a" stroke-width="0.7"/>
<path d="M4.8 13L13 4.8" stroke="#141414" stroke-width="1"/>
<path d="M2.2 10.4L10.4 2.2" stroke="#a09060" stroke-width="0.5"/>
<circle cx="12.2" cy="2.9" r="2" fill="#de7a66" stroke="#b2503e" stroke-width="0.6"/>
<path d="M0.9 14.1L2.2 10.4L4.8 13Z" fill="#d4d4d4" stroke="#6a6a6a" stroke-width="0.5"/>
<path d="M0.9 14.1L1.5 12.3L2.7 13.5Z" fill="#101010"/>
</svg>
<div class="t" style="left:358.72px;top:548px;transform:scaleX(0.9783);">Éviter les vues en coupe multiples</div>
<div class="t" style="left:797.03px;top:533px;transform:scaleX(0.9482);">Créer  une seule fois les vues</div>
<div class="t" style="left:796.76px;top:548px;transform:scaleX(0.9931);">identiques lors de la création</div>
<div class="t" style="left:797.01px;top:563px;transform:scaleX(0.9876);">automatique des vues en coupe</div>
<div class="a" style="left:640px;top:548px;width:14px;height:13px;border:1px solid #505050;background:#fff"></div>
<svg class="a" style="left:640px;top:548px" width="14" height="13" viewBox="0 0 14 13"><path d="M2.5 6.7L6.2 10.2L11.6 2.5" stroke="#111" stroke-width="1.8" fill="none"/></svg>
<!-- status bar -->
<div class="a" style="left:1px;top:653px;width:1005px;height:21px;background:#f0eded"></div>
<div class="t" style="left:3.81px;top:657px;transform:scaleX(0.9914);">Dérivation automatique de dessin &gt; Dessin de fabrication</div>
</body></html>
